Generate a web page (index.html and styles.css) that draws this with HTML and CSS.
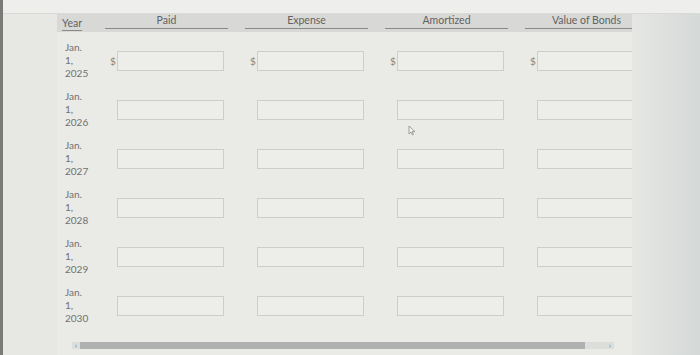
FILE: index.html
```html
<!DOCTYPE html>
<html lang="en">
<head>
    <meta charset="UTF-8">
    <meta name="viewport" content="width=device-width, initial-scale=1.0">
    <title>Bond Amortization Schedule</title>
    <link rel="stylesheet" href="styles.css">
</head>
<body>
    <div class="screen">
        <div class="top-strip"></div>

        <div class="main">
            <div class="gutter"></div>

            <div class="sheet">
                <div class="table">
                    <!-- header row -->
                    <div class="head">
                        <div class="year-head"><span>Year</span></div>
                        <div class="col-head"><span>Paid</span></div>
                        <div class="col-head"><span>Expense</span></div>
                        <div class="col-head"><span>Amortized</span></div>
                        <div class="col-head"><span>Value of Bonds</span></div>
                    </div>

                    <div class="row">
                        <div class="year">Jan.<br>1,<br>2025</div>
                        <div class="entry"><span class="dollar">$</span><input type="text" class="box"></div>
                        <div class="entry"><span class="dollar">$</span><input type="text" class="box"></div>
                        <div class="entry"><span class="dollar">$</span><input type="text" class="box"></div>
                        <div class="entry"><span class="dollar">$</span><input type="text" class="box"></div>
                    </div>

                    <div class="row">
                        <div class="year">Jan.<br>1,<br>2026</div>
                        <div class="entry"><span class="dollar"></span><input type="text" class="box"></div>
                        <div class="entry"><span class="dollar"></span><input type="text" class="box"></div>
                        <div class="entry"><span class="dollar"></span><input type="text" class="box"></div>
                        <div class="entry"><span class="dollar"></span><input type="text" class="box"></div>
                    </div>

                    <div class="row">
                        <div class="year">Jan.<br>1,<br>2027</div>
                        <div class="entry"><span class="dollar"></span><input type="text" class="box"></div>
                        <div class="entry"><span class="dollar"></span><input type="text" class="box"></div>
                        <div class="entry"><span class="dollar"></span><input type="text" class="box"></div>
                        <div class="entry"><span class="dollar"></span><input type="text" class="box"></div>
                    </div>

                    <div class="row">
                        <div class="year">Jan.<br>1,<br>2028</div>
                        <div class="entry"><span class="dollar"></span><input type="text" class="box"></div>
                        <div class="entry"><span class="dollar"></span><input type="text" class="box"></div>
                        <div class="entry"><span class="dollar"></span><input type="text" class="box"></div>
                        <div class="entry"><span class="dollar"></span><input type="text" class="box"></div>
                    </div>

                    <div class="row">
                        <div class="year">Jan.<br>1,<br>2029</div>
                        <div class="entry"><span class="dollar"></span><input type="text" class="box"></div>
                        <div class="entry"><span class="dollar"></span><input type="text" class="box"></div>
                        <div class="entry"><span class="dollar"></span><input type="text" class="box"></div>
                        <div class="entry"><span class="dollar"></span><input type="text" class="box"></div>
                    </div>

                    <div class="row">
                        <div class="year">Jan.<br>1,<br>2030</div>
                        <div class="entry"><span class="dollar"></span><input type="text" class="box"></div>
                        <div class="entry"><span class="dollar"></span><input type="text" class="box"></div>
                        <div class="entry"><span class="dollar"></span><input type="text" class="box"></div>
                        <div class="entry"><span class="dollar"></span><input type="text" class="box"></div>
                    </div>
                </div>

                <!-- horizontal scrollbar -->
                <div class="scrollbar">
                    <span class="arrow">&#8249;</span>
                    <div class="track"><div class="thumb"></div></div>
                    <span class="arrow">&#8250;</span>
                </div>

                <!-- mouse pointer -->
                <svg class="pointer" width="8" height="11" viewBox="0 0 8 11">
                    <path d="M1 1 L1 9 L3 7 L4.5 10 L5.5 9.5 L4.2 6.6 L7 6.6 Z" fill="#f2f2f0" stroke="#8a8a88" stroke-width="0.8"/>
                </svg>
            </div>

            <div class="side"></div>
        </div>
    </div>
</body>
</html>
```

FILE: styles.css
```css
body {
    margin: 0;
    font-family: Lato, "Open Sans", Arial, sans-serif;
    background: #e9e9e6;
    width: 700px;
    height: 355px;
    overflow: hidden;
}

.screen {
    height: 355px;
    border-left: 3px solid #7a7a78;
    box-sizing: border-box;
    display: flex;
    flex-direction: column;
}

.top-strip {
    height: 13px;
    background: #eeeeec;
    border-bottom: 1px solid #dadad7;
    box-shadow: 0 1px 2px rgba(0, 0, 0, 0.05);
}

.main {
    flex: 1;
    display: flex;
}

.gutter {
    width: 54px;
    background: #e7e7e4;
}

.sheet {
    position: relative;
    width: 575px;
    background: #eaeae7;
    overflow: hidden;
}

.table {
    width: 608px;
}

.head {
    display: grid;
    grid-template-columns: 48px repeat(4, 140px);
    height: 18px;
    background: #d8d9d7;
    color: #626262;
    font-size: 10.5px;
}

.year-head {
    padding: 3px 0 0 5px;
}

.year-head span {
    display: inline-block;
    padding-bottom: 1px;
    border-bottom: 1px solid #8a8a88;
    line-height: 11px;
}

.col-head {
    padding-top: 1px;
}

.col-head span {
    display: block;
    width: 123px;
    text-align: center;
    line-height: 11px;
    padding-bottom: 2px;
    border-bottom: 1px solid #8a8a88;
}

.row {
    display: grid;
    grid-template-columns: 48px repeat(4, 140px);
    height: 49px;
    align-items: center;
}

.head + .row {
    margin-top: 4px;
}

.year {
    padding-left: 8px;
    font-size: 10px;
    line-height: 13px;
    color: #707070;
}

.entry {
    display: flex;
    align-items: center;
}

.dollar {
    width: 12px;
    padding-left: 5px;
    box-sizing: border-box;
    font-size: 10px;
    color: #858583;
}

.box {
    width: 107px;
    height: 20px;
    margin: 0;
    padding: 0;
    border: 1px solid #cdcdca;
    background: #ededea;
    box-sizing: border-box;
}

.scrollbar {
    display: flex;
    align-items: center;
    margin: 12px 0 0 15px;
    width: 542px;
    height: 7px;
    background: #dcdedb;
}

.arrow {
    width: 8px;
    font-size: 7px;
    line-height: 7px;
    color: #6f6f6f;
    text-align: center;
}

.track {
    flex: 1;
    height: 7px;
}

.thumb {
    width: 505px;
    height: 7px;
    background: #aeb1af;
}

.pointer {
    position: absolute;
    left: 351px;
    top: 111px;
}

.side {
    flex: 1;
    background: linear-gradient(to right, #e6e7e4, #d5d9d8);
}
```
